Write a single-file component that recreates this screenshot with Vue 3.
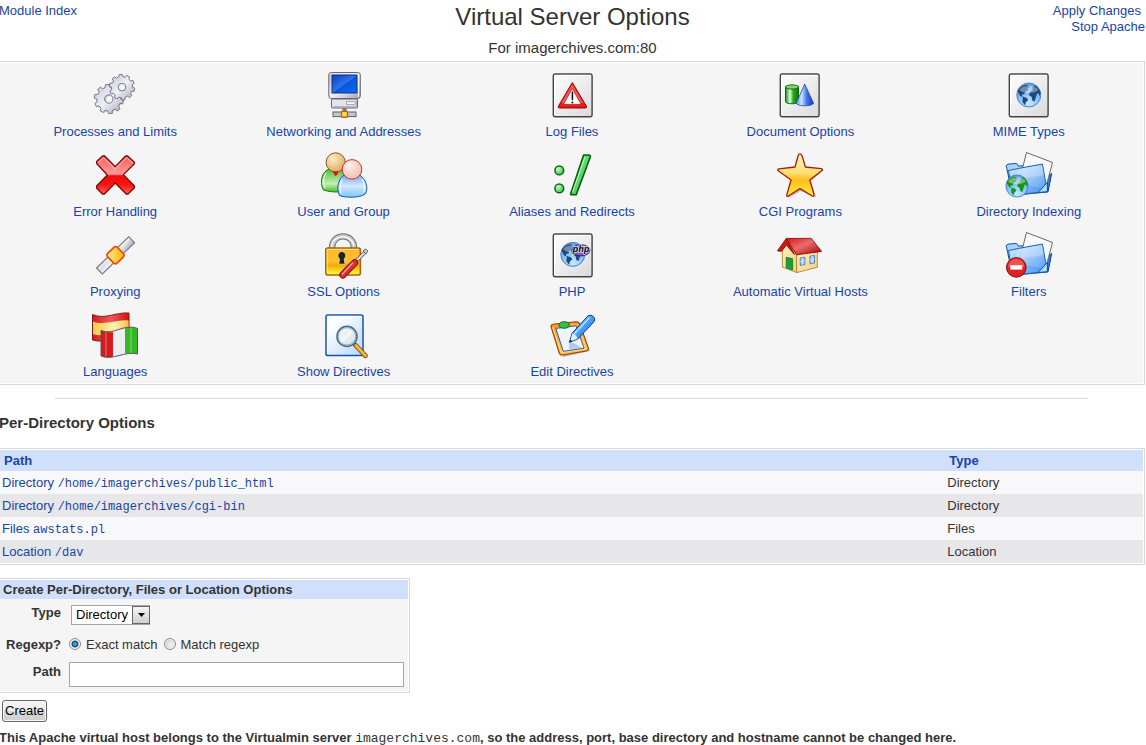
<script setup>
import { ref } from 'vue'

const modules = [
  { icon: 'gears', label: 'Processes and Limits' },
  { icon: 'network', label: 'Networking and Addresses' },
  { icon: 'log', label: 'Log Files' },
  { icon: 'document', label: 'Document Options' },
  { icon: 'mime', label: 'MIME Types' },
  { icon: 'error', label: 'Error Handling' },
  { icon: 'users', label: 'User and Group' },
  { icon: 'alias', label: 'Aliases and Redirects' },
  { icon: 'star', label: 'CGI Programs' },
  { icon: 'indexing', label: 'Directory Indexing' },
  { icon: 'proxy', label: 'Proxying' },
  { icon: 'ssl', label: 'SSL Options' },
  { icon: 'php', label: 'PHP', badge: 'php' },
  { icon: 'house', label: 'Automatic Virtual Hosts' },
  { icon: 'filters', label: 'Filters' },
  { icon: 'languages', label: 'Languages' },
  { icon: 'show', label: 'Show Directives' },
  { icon: 'edit', label: 'Edit Directives' },
]

const directories = [
  { type: 'Directory', path: '/home/imagerchives/public_html' },
  { type: 'Directory', path: '/home/imagerchives/cgi-bin' },
  { type: 'Files', path: 'awstats.pl' },
  { type: 'Location', path: '/dav' },
]

const type = ref('Directory')
const match = ref('exact')
const path = ref('')

// Outline of a toothed wheel with a round hole.
function gear(cx, cy, outer, inner, hole, teeth) {
  const points = []
  const step = (Math.PI * 2) / teeth
  for (let i = 0; i < teeth; i++) {
    const a = i * step + 0.2
    for (const [offset, r] of [[-0.3, inner], [-0.2, outer], [0.2, outer], [0.3, inner]]) {
      const t = a + offset * step
      points.push(`${(cx + r * Math.cos(t)).toFixed(1)} ${(cy + r * Math.sin(t)).toFixed(1)}`)
    }
  }
  return `M${points.join('L')}ZM${cx - hole} ${cy}a${hole} ${hole} 0 1 0 ${hole * 2} 0a${hole} ${hole} 0 1 0 ${-hole * 2} 0Z`
}
</script>

<template>
  <svg class="sprite" aria-hidden="true">
    <defs>
      <linearGradient id="metal" x1="0" y1="0" x2="1" y2="1"><stop offset="0" stop-color="#c4c4d2" /><stop offset=".5" stop-color="#f0f0f6" /><stop offset="1" stop-color="#a4a4b6" /></linearGradient>
      <linearGradient id="page" x1="0" y1="0" x2="1" y2="1"><stop offset="0" stop-color="#fff" /><stop offset="1" stop-color="#dadada" /></linearGradient>
      <linearGradient id="pageBlue" x1="0" y1="0" x2="1" y2="1"><stop offset=".2" stop-color="#fff" /><stop offset="1" stop-color="#b4d8ff" /></linearGradient>
      <linearGradient id="screen" x1="0" y1="0" x2="1" y2="1"><stop offset="0" stop-color="#0a3fc0" /><stop offset=".5" stop-color="#2876ee" /><stop offset=".52" stop-color="#0b55dc" /><stop offset="1" stop-color="#0d6cf0" /></linearGradient>
      <linearGradient id="redCross" x1="0" y1="0" x2="0" y2="1"><stop offset="0" stop-color="#ff5a5a" /><stop offset=".48" stop-color="#ff9c9c" /><stop offset=".52" stop-color="#f40808" /><stop offset=".75" stop-color="#f81414" /><stop offset="1" stop-color="#ff5c5c" /></linearGradient>
      <linearGradient id="starFill" x1="0" y1="0" x2="0" y2="1"><stop offset="0" stop-color="#fff6c8" /><stop offset=".45" stop-color="#ffe070" /><stop offset=".62" stop-color="#ffbe18" /><stop offset="1" stop-color="#fff040" /></linearGradient>
      <linearGradient id="green" x1="0" y1="0" x2="1" y2="0"><stop offset="0" stop-color="#109010" /><stop offset=".35" stop-color="#dcffdc" /><stop offset=".6" stop-color="#28a818" /><stop offset="1" stop-color="#0a7a0a" /></linearGradient>
      <linearGradient id="cone" x1="0" y1="0" x2="1" y2="0"><stop offset="0" stop-color="#5c90f0" /><stop offset=".3" stop-color="#d0e4ff" /><stop offset=".6" stop-color="#4478ea" /><stop offset="1" stop-color="#1038c0" /></linearGradient>
      <linearGradient id="slash" x1="0" y1="0" x2="1" y2="1"><stop offset="0" stop-color="#a0f0a0" /><stop offset="1" stop-color="#20b830" /></linearGradient>
      <radialGradient id="dot" cx=".35" cy=".3" r=".8"><stop offset="0" stop-color="#c8ffc8" /><stop offset="1" stop-color="#30b840" /></radialGradient>
      <radialGradient id="sea" cx=".5" cy=".85" r=".9"><stop offset="0" stop-color="#c8ecff" /><stop offset=".5" stop-color="#80c0f8" /><stop offset="1" stop-color="#5898e4" /></radialGradient>
      <radialGradient id="tan" cx=".35" cy=".3" r=".8"><stop offset="0" stop-color="#ffecc8" /><stop offset="1" stop-color="#dca658" /></radialGradient>
      <radialGradient id="pink" cx=".35" cy=".3" r=".8"><stop offset="0" stop-color="#fff0ea" /><stop offset="1" stop-color="#f4b8a8" /></radialGradient>
      <linearGradient id="bodyGreen" x1="0" y1="0" x2="0" y2="1"><stop offset="0" stop-color="#4cba38" /><stop offset=".65" stop-color="#c4f0b4" /><stop offset="1" stop-color="#44c028" /></linearGradient>
      <linearGradient id="bodyBlue" x1="0" y1="0" x2="0" y2="1"><stop offset="0" stop-color="#68a8f8" /><stop offset=".5" stop-color="#d4e8ff" /><stop offset="1" stop-color="#80c4ff" /></linearGradient>
      <linearGradient id="folderFill" x1="0" y1="0" x2="1" y2="1"><stop offset="0" stop-color="#dcf0ff" /><stop offset=".5" stop-color="#8cc0fa" /><stop offset="1" stop-color="#2880f0" /></linearGradient>
      <linearGradient id="gold" x1="0" y1="0" x2="0" y2="1"><stop offset="0" stop-color="#ffb828" /><stop offset=".5" stop-color="#ffc030" /><stop offset=".65" stop-color="#f4aa08" /><stop offset="1" stop-color="#ffff40" /></linearGradient>
      <linearGradient id="joint" x1="0" y1="0" x2="1" y2="1"><stop offset="0" stop-color="#fff0a0" /><stop offset=".5" stop-color="#ffd048" /><stop offset="1" stop-color="#ffb000" /></linearGradient>
      <linearGradient id="roof" x1="0" y1="0" x2="1" y2="1"><stop offset="0" stop-color="#d01818" /><stop offset=".45" stop-color="#ec6c6c" /><stop offset="1" stop-color="#9c0000" /></linearGradient>
      <linearGradient id="wall" x1="0" y1="0" x2="1" y2="1"><stop offset="0" stop-color="#fff4c8" /><stop offset="1" stop-color="#f4d070" /></linearGradient>
      <linearGradient id="yellowBand" x1="0" y1="0" x2="1" y2="0"><stop offset="0" stop-color="#ffc848" /><stop offset=".6" stop-color="#fff4b0" /><stop offset="1" stop-color="#f4c048" /></linearGradient>
      <linearGradient id="redBand" x1="0" y1="0" x2="1" y2="0"><stop offset="0" stop-color="#d81820" /><stop offset=".5" stop-color="#f05858" /><stop offset="1" stop-color="#d01010" /></linearGradient>
      <linearGradient id="pencil" x1="0" y1="0" x2="1" y2="1"><stop offset="0" stop-color="#a8e0ff" /><stop offset=".5" stop-color="#48a0f8" /><stop offset="1" stop-color="#1050d0" /></linearGradient>
      <linearGradient id="board" x1="0" y1="0" x2="1" y2="1"><stop offset="0" stop-color="#ff9018" /><stop offset="1" stop-color="#ffd860" /></linearGradient>
      <linearGradient id="purple" x1="0" y1="0" x2="0" y2="1"><stop offset="0" stop-color="#b4a4ec" /><stop offset="1" stop-color="#6450b8" /></linearGradient>
    </defs>

    <symbol id="i-sheet" viewBox="0 0 48 48">
      <rect x="5.3" y="3" width="38.8" height="42.8" rx="2" fill="url(#page)" stroke="#444" stroke-width="1.4" />
      <path d="M6.6 44V4.4H43" fill="none" stroke="#fff" />
    </symbol>

    <symbol id="i-globe" viewBox="0 0 26 26">
      <circle cx="13" cy="13" r="12" fill="url(#sea)" stroke="#4a80c8" />
      <path class="land" d="M1.8 9C4 5 8 2.4 11.5 3l2 2.2-2 1.6.6 1.6-2.6 1.2-1 2.6-2.6.4.8 2.6-2.6-1.4-1.6-3.2ZM7 14.5l4 1.4 1.4 2-2.4 2.4-.8 3-2.6-3.4ZM14 10.2l3-2.2-.4-3 3-1.4c3 2 4.8 5 5.2 8l-1.6 2.6-.2-2.6-1.8-.2-1 3.6-1.4 4.4-2.2-.6-.8-4-2.6-1.6Z" />
      <path d="M3.5 8C6 2.5 20 2.5 22.5 8 18 12 8 12 3.5 8Z" fill="#fff" opacity=".38" />
    </symbol>

    <symbol id="i-folder" viewBox="0 0 48 48">
      <path d="M9 40 46.8 23.5 43 41.5 8 45Z" fill="#888" opacity=".35" />
      <path d="m40 27 6.7-4.5L43 40.8l-6 .6Z" fill="#2c84ec" stroke="#0b3f94" />
      <path d="M1.2 14.6 3 13.2l8.6-.8 1.8 2.8L34 13l2 28.5L7.5 44.2Z" fill="#a4d4ff" stroke="#14509c" />
      <path d="M21.5 1.5 47.5 11.5 40 39.5 13.5 33Z" fill="#f7f9fe" stroke="#666" />
      <path d="M3.5 19.5 13.8 17.4 37.4 13l4.9 27.6L7.5 44.2Z" fill="url(#folderFill)" fill-opacity=".86" stroke="#1860b4" />
      <path d="M9 28Q22 27 39 24L37 14 13.8 18Z" fill="#fff" opacity=".25" />
      <path d="M42.4 31.5 33 41.5l9.3-.8Z" fill="#b4dcff" stroke="#0b48b0" />
    </symbol>

    <symbol id="i-gears" viewBox="0 0 48 48">
      <path :d="gear(19, 29, 14, 11.5, 4, 10)" fill="#666" opacity=".3" fill-rule="evenodd" />
      <path :d="gear(17.8, 28, 14.6, 12, 4.2, 10)" fill="url(#metal)" stroke="#77778a" fill-rule="evenodd" stroke-linejoin="round" />
      <path :d="gear(31, 16.2, 12.8, 10.6, 3.8, 10)" fill="url(#metal)" stroke="#77778a" fill-rule="evenodd" stroke-linejoin="round" />
    </symbol>

    <symbol id="i-network" viewBox="0 0 48 48">
      <rect x="8.8" y="1.5" width="31.5" height="26" rx="2.5" fill="url(#metal)" stroke="#666674" />
      <path d="M10 3h28.5v23" fill="none" stroke="#f5f5fa" />
      <rect x="12" y="4" width="25" height="18" fill="url(#screen)" stroke="#14307c" />
      <rect x="11.5" y="28" width="26" height="9" rx="1" fill="#e4e4ea" stroke="#666674" />
      <path d="M13 35.5h23.5V29" fill="none" stroke="#b4b4c0" />
      <rect x="26.5" y="30.6" width="8.5" height="3" fill="#f4f4f8" stroke="#a8a8b4" />
      <rect x="22.5" y="37" width="4" height="4" fill="#777784" />
      <rect x="13" y="41" width="23" height="4.6" fill="#c4c4ce" stroke="#606068" />
      <rect x="21.5" y="40.2" width="6" height="6" rx="1" fill="#ffd850" stroke="#c06800" stroke-width="1.4" />
    </symbol>

    <symbol id="i-log" viewBox="0 0 48 48">
      <use href="#i-sheet" />
      <path d="M24.3 11.6 10.4 35.2q-.6 1.8 1 1.8h26q1.6 0 1-1.8Z" fill="#e81c1c" stroke="#940000" stroke-linejoin="round" />
      <path d="M13.2 32 24.3 13.2 35.4 32Z" fill="#ff8888" opacity=".55" />
      <path d="M24.3 17.6 15.4 33.4h17.8Z" fill="#fff" stroke="#c00000" stroke-width=".7" />
      <path d="M24.4 20.6v8.6" stroke="#111" stroke-width="1.5" /><path d="M24.4 30.6v1.8" stroke="#111" stroke-width="1.7" />
    </symbol>

    <symbol id="i-document" viewBox="0 0 48 48">
      <use href="#i-sheet" x="-1" />
      <path d="M9.5 16v14.5c0 3 13 3 13 0V16Z" fill="url(#green)" stroke="#0a6c0a" />
      <ellipse cx="16" cy="16" rx="6.5" ry="2.1" fill="#88d470" stroke="#0a6c0a" />
      <path d="M28.7 13 20.2 32.3c1 3.3 16 3.3 17.4 0Z" fill="url(#cone)" stroke="#1c48b8" stroke-width=".8" stroke-linejoin="round" />
    </symbol>

    <symbol id="i-mime" viewBox="0 0 48 48">
      <use href="#i-sheet" x="-1" />
      <use class="dark-land" href="#i-globe" x="10.8" y="11" width="26" height="26" />
    </symbol>

    <symbol id="i-error" viewBox="0 0 48 48">
      <path d="M5.6 10.5 11.6 5h2L24.2 15.6 34.6 5h2l6.8 6.2v1.6L32.4 23.6 43.4 35v1.8L37 43h-1.8L24.2 32 13.4 43h-2l-5.8-6v-2L16.4 24 5.6 12.5Z" fill="url(#redCross)" stroke="#7c0808" stroke-width="1.3" stroke-linejoin="round" />
      <path d="m7.4 11.4 5.1-4.8 11.7 11.6L35.6 6.6l6 5.2" fill="none" stroke="#ffc4c4" stroke-width=".9" />
    </symbol>

    <symbol id="i-users" viewBox="0 0 48 48">
      <path d="M3.5 39C-1 31 2 20 10 17.5h13C29 24 28 34 25 40.5Q12 42 3.5 39Z" fill="url(#bodyGreen)" stroke="#187818" />
      <path d="M6 22c-3 5-3 10-1 15" fill="none" stroke="#d8ffd0" stroke-width="1.2" />
      <circle cx="15.7" cy="11.4" r="9.6" fill="url(#tan)" stroke="#8c5c18" />
      <path d="M12.5 20.5h6.5l-3.3 5Z" fill="#e81010" />
      <path d="M19.5 44.5C16 38 18 27 25 23.5h14c7 4 10 14 6.2 19.5-5 4-20 4-25.7 1.5Z" fill="url(#bodyBlue)" stroke="#1858b8" />
      <path d="M22.5 28c-3 5-3 10-1.5 14M42 28c2.5 4 3.5 9 1.6 13" fill="none" stroke="#e8f4ff" stroke-width="1.5" />
      <circle cx="32" cy="18.4" r="9.8" fill="url(#pink)" stroke="#c83030" />
    </symbol>

    <symbol id="i-alias" viewBox="0 0 48 48">
      <circle cx="11.3" cy="19.4" r="4.4" fill="url(#dot)" stroke="#086818" stroke-width="1.5" />
      <circle cx="11.3" cy="37.4" r="4.4" fill="url(#dot)" stroke="#086818" stroke-width="1.5" />
      <path d="m35.6 4-13 39q0 .8.8.8h4.8l14-37.5q.7-2.3-1.4-2.3Z" fill="url(#slash)" stroke="#065c14" stroke-width="1.6" stroke-linejoin="round" />
      <path d="M37 6 24.6 41" stroke="#b8ffb8" />
    </symbol>

    <symbol id="i-star" viewBox="0 0 48 48">
      <path d="m25 4 5 14 17 1.5L35 30l5 16.5L25 40 12 47" fill="#666" opacity=".4" />
      <path d="M24 2.8q1.4-.2 2 2L29.4 16l15.8 1.7q2 .4.8 1.9L33.8 29 38 43.4q.3 2.6-1.8 1.6L24 37.6l-12 7.7q-1.7.4-1.2-1.5L15 29 2.2 19.8q-1.2-1.7.8-2L19 16 22.2 4.5Q22.8 2.6 24 2.8Z" fill="url(#starFill)" stroke="#a81c10" stroke-width="1.3" stroke-linejoin="round" />
    </symbol>

    <symbol id="i-indexing" viewBox="0 0 48 48">
      <use href="#i-folder" />
      <use class="green-land" href="#i-globe" x="0" y="23" width="24" height="24" />
    </symbol>

    <symbol id="i-proxy" viewBox="0 0 48 48">
      <g transform="rotate(-44 24.7 24.2)">
        <rect x="2" y="20" width="45" height="8.4" fill="url(#metal)" stroke="#707078" />
        <path d="M3 22h43" stroke="#eee" stroke-width="1.5" />
        <rect x="17.8" y="17.3" width="13.5" height="13.5" rx="2.8" fill="url(#joint)" stroke="#ec4c08" stroke-width="1.7" />
      </g>
    </symbol>

    <symbol id="i-ssl" viewBox="0 0 48 48">
      <path d="M12 17C12 1.5 34 1.5 34 17" fill="none" stroke="#707070" stroke-width="6.4" />
      <path d="M12 17C12 1.5 34 1.5 34 17" fill="none" stroke="#c8c8c8" stroke-width="4.4" />
      <path d="M11.5 16C12 2.6 32 2.6 34 15" fill="none" stroke="#fff" stroke-width="1.2" />
      <rect x="5.8" y="17" width="34.6" height="27" rx="2" fill="url(#gold)" stroke="#a86404" stroke-width="1.6" />
      <path d="M7.2 42V18.4H39" fill="none" stroke="#ffe894" />
      <path d="M21.8 20.4a4.2 4.2 0 0 0-2.3 7.5l-.8 5.3h6.4l-.9-5.3a4.2 4.2 0 0 0-2.4-7.5Z" fill="#222" stroke="#ffe080" stroke-width=".8" />
      <path d="M34 32 45 21.2" stroke="#606060" stroke-width="3.6" /><path d="M34 32 45 21.2" stroke="#e4e4ee" stroke-width="1.8" />
      <path d="m43 20 2.8-2 2 1.8-1.8 3.2Z" fill="#ccc" stroke="#606060" />
      <path d="M34.8 31.8 28 38.5 22.8 44" stroke="#7c0808" stroke-width="7" stroke-linecap="round" fill="none" />
      <path d="M34.8 31.8 28 38.5 22.8 44" stroke="#dc3030" stroke-width="5.2" stroke-linecap="round" fill="none" />
      <path d="m33 31.5-11 12" stroke="#ff9c9c" stroke-width="1.4" />
    </symbol>

    <symbol id="i-php" viewBox="0 0 48 48">
      <use href="#i-sheet" />
      <use class="dark-land" href="#i-globe" x="11.8" y="10.4" width="26" height="26" />
      <ellipse cx="32.8" cy="19.3" rx="9.2" ry="5.6" fill="url(#purple)" stroke="#34247c" />
    </symbol>

    <symbol id="i-house" viewBox="0 0 48 48">
      <path d="M6.4 18 10.5 10l10.2 14v17.6L6.4 36.2Z" fill="url(#wall)" stroke="#a87830" stroke-width=".8" />
      <path d="M20.7 23.5 41.3 20v16.3l-20.6 5.3Z" fill="url(#wall)" stroke="#a87830" stroke-width=".8" />
      <path d="m10.2 26.2 6.4 1.6V39l-6.4-2.2Z" fill="#14a03c" stroke="#0c7828" stroke-width=".8" />
      <path d="m24.2 27 4.6-.8v7.4l-4.6.8ZM34 25.2l4.5-.8V32l-4.5.8Z" fill="#a4d0ff" stroke="#4880d0" />
      <path d="M26.5 26.6V34M24.2 30.7l4.6-.8M36.3 24.8v7.6M34 29l4.5-.8" stroke="#fff" stroke-width=".5" />
      <path d="M10.3 7.4 1.4 19.8l4 .8 5-6.5 8 9.4Z" fill="#cc1818" stroke="#800808" stroke-width=".8" stroke-linejoin="round" />
      <path d="M10.3 7.4h25l10.3 13-25 3.4Z" fill="url(#roof)" stroke="#940a0a" stroke-width=".9" stroke-linejoin="round" />
    </symbol>

    <symbol id="i-filters" viewBox="0 0 48 48">
      <use href="#i-folder" />
      <circle cx="11.3" cy="36.4" r="9.8" fill="#e02020" stroke="#900808" />
      <path d="M3 36a8.3 8.3 0 0 1 16.6 0Z" fill="#ff8484" opacity=".5" />
      <rect x="5.3" y="34.2" width="12" height="4.4" fill="#fff" />
    </symbol>

    <symbol id="i-languages" viewBox="0 0 48 48">
      <path d="M1.5 3.6C14 9 25 .8 38 2v24.5C25 24.5 14 33 1.5 29Z" fill="url(#redBand)" stroke="#801818" />
      <path d="M2 10.5C14 15 25 8 37.6 9.5v12C25 19 14 27 2 23.3Z" fill="url(#yellowBand)" />
      <path d="M10 19.5C14 21 18 21.5 22 21v24.8c-4 .8-8 .8-12-.8Z" fill="#d41c20" />
      <path d="M22 21c4-1 8-3 12-4v25.6c-4 .6-8 2.6-12 3.2Z" fill="#ececf2" />
      <path d="M34 17c4-1 8-1 12.5.4V43c-4.5-1.2-8.5-1.2-12.5-.4Z" fill="#34b824" />
      <path d="M15 21v24M40 16.5V42" stroke="#fff" stroke-width="2" opacity=".2" />
      <path d="M10 19.5C22 25 33 12 46.5 17.4V43C34 39.5 22 50 10 45Z" fill="none" stroke="#555" />
    </symbol>

    <symbol id="i-show" viewBox="0 0 48 48">
      <rect x="6" y="4" width="37" height="40.5" rx="1.8" fill="url(#pageBlue)" stroke="#1454a8" stroke-width="1.5" />
      <path d="M7.5 43V5.4h34" fill="none" stroke="#fff" />
      <path d="m35.5 34.2 10 10.6" stroke="#80500c" stroke-width="4.6" stroke-linecap="round" />
      <path d="m36 34.5 9.5 10.2" stroke="#ffb440" stroke-width="2.8" stroke-linecap="round" />
      <circle cx="27" cy="25.4" r="10" fill="url(#page)" fill-opacity=".75" stroke="#606a74" stroke-width="1.6" />
      <circle cx="27" cy="25.4" r="8.7" fill="none" stroke="#74b4ec" />
      <path d="m21 31 11-11" stroke="#fff" stroke-width="3" opacity=".5" />
    </symbol>

    <symbol id="i-edit" viewBox="0 0 48 48">
      <path d="M5 17 32 14l10 26-27 6Z" fill="#555" opacity=".4" />
      <path d="M3 15.5Q3.4 13 6 13l22-2.2q3 0 3.8 2.2l8.4 23.8q.4 2.2-1.8 3L14.6 44q-2.6.6-3.2-1.8Z" fill="url(#board)" stroke="#a84008" stroke-width="1.2" />
      <path d="m4.7 16.5 8.3 24.8 25.5-4" fill="none" stroke="#fff0a0" />
      <path d="m7.8 17.4 20.3-2.6 8 22.5-20.8 3Z" fill="#eef4ff" stroke="#2c60b0" />
      <path d="m21.5 31.5 4 .5 8.5 5-13 1.6Z" fill="#4878c0" opacity=".35" />
      <ellipse cx="16.2" cy="14" rx="5.3" ry="3.3" fill="#38bc44" stroke="#087020" />
      <path d="m21.4 31.4 2.8-9.3L40 4.8q3.6-2 6.2 1.8 1.3 2.5-.5 4.4L29.8 28Z" fill="url(#pencil)" stroke="#123c90" stroke-linejoin="round" />
      <path d="m22 30.5 2.4-8q3.8 1 5.2 5.2Z" fill="#dceeff" /><path d="m21.2 31.6 1-3.4 2.2 2.2Z" fill="#102c70" />
      <path d="M26 23.4 41.5 6.6" stroke="#c4e8ff" stroke-width="1.4" />
    </symbol>
  </svg>

  <div class="page">
    <header class="top">
      <nav class="top-left"><a href="#">Module Index</a></nav>
      <div class="title">
        <h1>Virtual Server Options</h1>
        <p>For imagerchives.com:80</p>
      </div>
      <nav class="top-right">
        <a class="apply" href="#">Apply Changes</a>
        <a href="#">Stop Apache</a>
      </nav>
    </header>

    <main>
      <div class="frame">
        <div class="modules">
          <a v-for="m in modules" :key="m.icon" class="module" href="#">
            <svg width="48" height="48" aria-hidden="true">
              <use :href="`#i-${m.icon}`" />
              <text v-if="m.badge" class="badge" x="33" y="21" text-anchor="middle">{{ m.badge }}</text>
            </svg>
            <span>{{ m.label }}</span>
          </a>
        </div>
      </div>

      <hr>

      <h2>Per-Directory Options</h2>

      <div class="frame">
        <table class="directories">
          <thead>
            <tr><th scope="col" class="path-col">Path</th><th scope="col">Type</th></tr>
          </thead>
          <tbody>
            <tr v-for="d in directories" :key="d.path">
              <td><a href="#">{{ d.type }} <code>{{ d.path }}</code></a></td>
              <td>{{ d.type }}</td>
            </tr>
          </tbody>
        </table>
      </div>

      <form @submit.prevent>
        <div class="frame create">
          <h3>Create Per-Directory, Files or Location Options</h3>
          <div class="fields">
            <label class="name" for="type">Type</label>
            <div class="select">
              <select id="type" v-model="type">
                <option>Directory</option>
                <option>Files</option>
                <option>Location</option>
              </select>
              <span class="arrow" aria-hidden="true"><svg width="7" height="4"><path d="M0 0h7L3.5 4Z" /></svg></span>
            </div>

            <span id="regexp" class="name middle">Regexp?</span>
            <div class="radios middle" role="radiogroup" aria-labelledby="regexp">
              <label><input v-model="match" type="radio" name="match" value="exact">Exact match</label>
              <label><input v-model="match" type="radio" name="match" value="regexp">Match regexp</label>
            </div>

            <label class="name last" for="path">Path</label>
            <input id="path" v-model="path" class="text" type="text">
          </div>
        </div>
        <button type="submit">Create</button>
      </form>

      <p class="note">This Apache virtual host belongs to the Virtualmin server <code>imagerchives.com</code>, so the address, port, base directory and hostname cannot be changed here.</p>
    </main>
  </div>
</template>

<style>
body {
  background: #fff;
  overflow: hidden;
}
</style>

<style scoped>
.sprite {
  position: absolute;
  width: 0;
  height: 0;
}
.land { fill: var(--land); }
.dark-land { --land: #204878; }
.green-land { --land: #189418; }
.badge {
  font: italic 700 8px "DejaVu Sans", sans-serif;
  fill: #111;
  stroke: #fff;
  stroke-width: 1px;
  paint-order: stroke;
}
.page {
  margin: 0 1px 0 -2px;
  color: #333;
  font: 13px/16px "Liberation Sans", Arial, sans-serif;
}
a {
  color: #1844a4;
  text-decoration: none;
}
.top {
  display: grid;
  grid-template-columns: 1fr 2fr 1fr;
  height: 61px;
}
.top nav {
  padding-top: 3px;
}
.top-left {
  padding-left: 1px;
}
.top-right {
  display: flex;
  flex-direction: column;
  align-items: flex-end;
}
.apply {
  padding-right: 4px;
}
.title {
  padding-left: 2px;
  text-align: center;
}
h1 {
  margin: 0;
  padding-top: 3px;
  font-size: 24px;
  line-height: 28px;
  font-weight: 400;
}
.title p {
  margin: 8px 0 0;
  font-size: 15px;
  line-height: 18px;
}
.frame {
  border: 1px solid #d8d8d8;
  padding: 1px;
}
.modules {
  display: grid;
  grid-template-columns: repeat(5, 1fr);
  padding-left: 1px;
  background: #f5f5f5;
}
.module {
  display: flex;
  flex-direction: column;
  align-items: center;
  gap: 5px;
  padding: 8px 0 3px;
}
.module svg {
  display: block;
}
hr {
  width: 90%;
  margin: 13px auto 0;
  border: 0;
  border-top: 1px solid #d8d8d8;
}
h2 {
  margin: 15px 0 16px 1px;
  font-size: 15px;
  line-height: 18px;
}
.directories {
  width: 100%;
  border-collapse: collapse;
  table-layout: fixed;
}
.directories th {
  height: 21px;
  padding: 0 4px;
  background: #d0dffc;
  color: #1844a4;
  text-align: left;
}
.directories .path-col {
  width: 82%;
}
.directories td {
  height: 23px;
  padding: 0 2px;
  background: #f8f8fb;
}
.directories tr:nth-child(even) td {
  background: #e7e7e9;
}
code {
  font: 12px/12px "Liberation Mono", "Courier New", monospace;
}
.create {
  width: 408px;
  margin-top: 13px;
}
.create h3 {
  margin: 0;
  padding: 0 3px;
  background: #d0dffc;
  font-size: 13px;
  line-height: 19px;
}
.fields {
  display: grid;
  grid-template-columns: 61px 1fr;
  column-gap: 8px;
  padding: 6px 4px 4px 0;
  background: #f5f5f5;
}
.name {
  font-weight: 700;
  text-align: right;
}
.middle {
  margin: 12px 0 9px;
}
.last {
  padding-top: 2px;
}
.select {
  position: relative;
  width: 79px;
  height: 20px;
  margin-left: 2px;
}
select {
  width: 100%;
  height: 100%;
  padding: 0 18px 0 4px;
  border: 1px solid #a4a4aa;
  border-radius: 0;
  background: #fff;
  color: #000;
  font: inherit;
  appearance: none;
}
.arrow {
  position: absolute;
  top: 1px;
  right: 0;
  width: 18px;
  height: 18px;
  box-sizing: border-box;
  border: 1px solid #666;
  background: linear-gradient(#f4f4f4, #d0d0d0);
  display: grid;
  place-items: center;
  pointer-events: none;
}
.radios {
  display: flex;
  gap: 6px;
}
.radios label {
  display: flex;
  gap: 5px;
}
.radios input {
  width: 12px;
  height: 12px;
  margin: 1px 0 0;
  border: 1px solid #8c8c8c;
  border-radius: 50%;
  background: radial-gradient(circle at 60% 60%, #f4f4f4, #c4c4c4);
  box-shadow: inset 0 0 0 1px #f4f4f4;
  appearance: none;
}
.radios input:checked {
  background: radial-gradient(circle, #5cc0ec 0, #14507c 3px, #eee 4px);
}
.text {
  box-sizing: border-box;
  width: 100%;
  height: 25px;
  border: 1px solid #a4a4aa;
  background: #fff;
  font: inherit;
}
button {
  display: block;
  height: 22px;
  margin: 7px 0 0 4px;
  padding: 0 2px;
  border: 1px solid #666;
  border-radius: 3px;
  background: linear-gradient(#f4f4f4, #ececec 50%, #dadada 50%, #d0d0d0);
  box-shadow: inset 0 0 0 1px #f8f8f8;
  color: #000;
  font: inherit;
}
.note {
  margin: 8px 0 0 1px;
  font-weight: 700;
  white-space: nowrap;
}
.note code {
  font-size: 13px;
}
</style>
